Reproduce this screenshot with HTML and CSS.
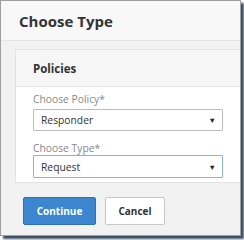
FILE: index.html
```html
<!DOCTYPE html>
<html>
<head>
<meta charset="utf-8">
<link rel="stylesheet" href="styles.css">
</head>
<body>
<div class="window">
  <div class="header"><span class="title">Choose Type</span></div>
  <div class="content">
    <div class="panel">
      <div class="panel-head">Policies</div>
      <div class="panel-body">
        <div class="label">Choose Policy*</div>
        <div class="select"><span>Responder</span><span class="arrow">▼</span></div>
        <div class="label second">Choose Type*</div>
        <div class="select focus"><span>Request</span><span class="arrow">▼</span></div>
      </div>
    </div>
    <div class="footer">
      <button class="btn primary">Continue</button>
      <button class="btn">Cancel</button>
    </div>
  </div>
</div>
</body>
</html>
```
FILE: styles.css
```css
html, body { margin: 0; padding: 0; background: #ffffff; }
body { width: 244px; height: 240px; overflow: hidden; font-family: "Open Sans", "Liberation Sans", sans-serif; }
.window {
  width: 239px; height: 234px;
  border: 1px solid #a0a0a0;
  box-shadow: 3px 3px 2px #3e4d60;
  background: #f2f2f2;
  overflow: hidden;
  display: flex; flex-direction: column;
}
.header {
  height: 39px; background: #f8f8f8; border-bottom: 1px solid #e4e4e4;
  display: flex; align-items: center; padding-left: 18px; flex: none;
}
.title { font-size: 15px; font-weight: 700; color: #333; }
.content { flex: 1; padding: 8px 0 0 14px; display: flex; flex-direction: column; }
.panel { background: #fff; border: 1px solid #e2e2e2; border-right: none; margin-right: -10px; }
.panel-head {
  height: 36px; background: #f6f6f6; border-bottom: 1px solid #e6e6e6;
  display: flex; align-items: center; padding-left: 17px;
  font-size: 11.5px; font-weight: 700; color: #333;
}
.panel-body { padding: 5px 0 4px 17px; }
.label { font-size: 10.3px; color: #888; height: 14px; line-height: 14px; margin-bottom: 3px; }
.label.second { margin-top: 10px; margin-bottom: 0; }
.select {
  width: 181px; height: 20px; border: 1px solid #bdbdbd; border-radius: 1px;
  display: flex; align-items: center; justify-content: space-between;
  padding: 0 0 0 7px;
  font-size: 10.3px; color: #333;
}
.select.focus { border-color: #8ab0e4; height: 21px; }
.arrow { font-size: 7.5px; color: #222; margin-right: 6px; }
.footer { display: flex; gap: 9px; padding: 14px 0 0 8px; }
.btn {
  font-family: "Open Sans", "Liberation Sans", sans-serif; font-size: 10px; font-weight: 700;
  height: 28px; border-radius: 2px; border: 1px solid #c8c8c8; background: #fff; color: #333;
  padding: 0; width: 60px;
}
.btn.primary { background: #3b86cf; border-color: #2f70b3; color: #fff; width: 73px; }
```
